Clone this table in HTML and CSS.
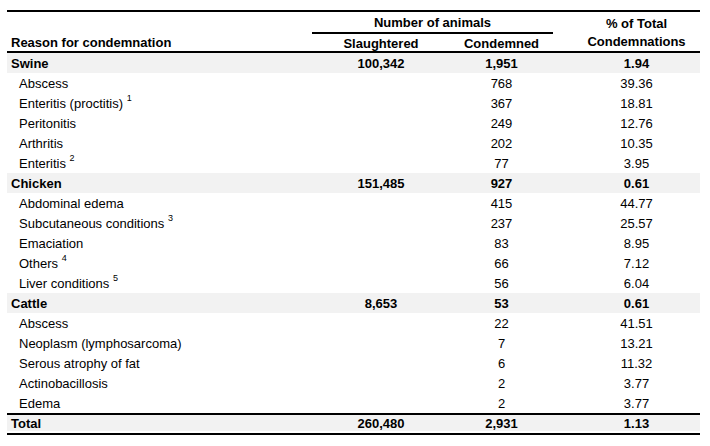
FILE: index.html
```html
<!DOCTYPE html>
<html>
<head>
<meta charset="utf-8">
<link rel="stylesheet" href="styles.css">
</head>
<body>
<table class="tbl">
  <colgroup>
    <col class="c-reason">
    <col class="c-slaugh">
    <col class="c-cond">
    <col class="c-pct">
  </colgroup>
  <thead>
    <tr class="h1">
      <th class="reason-h" rowspan="2">Reason for condemnation</th>
      <th class="group-h" colspan="2">Number of animals</th>
      <th class="pct-h" rowspan="2">% of Total<br>Condemnations</th>
    </tr>
    <tr class="h2">
      <th class="num">Slaughtered</th>
      <th class="num">Condemned</th>
    </tr>
  </thead>
  <tbody>
    <tr class="grp"><td>Swine</td><td class="num">100,342</td><td class="num">1,951</td><td class="pct">1.94</td></tr>
    <tr class="item"><td>Abscess</td><td></td><td class="num">768</td><td class="pct">39.36</td></tr>
    <tr class="item"><td>Enteritis (proctitis) <sup>1</sup></td><td></td><td class="num">367</td><td class="pct">18.81</td></tr>
    <tr class="item"><td>Peritonitis</td><td></td><td class="num">249</td><td class="pct">12.76</td></tr>
    <tr class="item"><td>Arthritis</td><td></td><td class="num">202</td><td class="pct">10.35</td></tr>
    <tr class="item"><td>Enteritis <sup>2</sup></td><td></td><td class="num">77</td><td class="pct">3.95</td></tr>
    <tr class="grp"><td>Chicken</td><td class="num">151,485</td><td class="num">927</td><td class="pct">0.61</td></tr>
    <tr class="item"><td>Abdominal edema</td><td></td><td class="num">415</td><td class="pct">44.77</td></tr>
    <tr class="item"><td>Subcutaneous conditions <sup>3</sup></td><td></td><td class="num">237</td><td class="pct">25.57</td></tr>
    <tr class="item"><td>Emaciation</td><td></td><td class="num">83</td><td class="pct">8.95</td></tr>
    <tr class="item"><td>Others <sup>4</sup></td><td></td><td class="num">66</td><td class="pct">7.12</td></tr>
    <tr class="item"><td>Liver conditions <sup>5</sup></td><td></td><td class="num">56</td><td class="pct">6.04</td></tr>
    <tr class="grp"><td>Cattle</td><td class="num">8,653</td><td class="num">53</td><td class="pct">0.61</td></tr>
    <tr class="item"><td>Abscess</td><td></td><td class="num">22</td><td class="pct">41.51</td></tr>
    <tr class="item"><td>Neoplasm (lymphosarcoma)</td><td></td><td class="num">7</td><td class="pct">13.21</td></tr>
    <tr class="item"><td>Serous atrophy of fat</td><td></td><td class="num">6</td><td class="pct">11.32</td></tr>
    <tr class="item"><td>Actinobacillosis</td><td></td><td class="num">2</td><td class="pct">3.77</td></tr>
    <tr class="item"><td>Edema</td><td></td><td class="num">2</td><td class="pct">3.77</td></tr>
  </tbody>
  <tfoot>
    <tr class="total"><td>Total</td><td class="num">260,480</td><td class="num">2,931</td><td class="pct">1.13</td></tr>
  </tfoot>
</table>
</body>
</html>
```

FILE: styles.css
```css
html, body {
  margin: 0;
  padding: 0;
  background: #fff;
}
body {
  padding: 10px 0 0 7px;
  font-family: "Liberation Sans", Arial, sans-serif;
  font-size: 13px;
  color: #000;
}
.tbl {
  width: 693px;
  border-collapse: separate;
  border-spacing: 0;
  table-layout: fixed;
  border-top: 2px solid #000;
}
.c-reason { width: 305px; }
.c-slaugh { width: 138px; }
.c-cond { width: 103px; }
.c-pct { width: 147px; }

th, td {
  padding: 0;
  line-height: 15px;
  white-space: nowrap;
  box-sizing: border-box;
}
th {
  font-weight: bold;
}

/* header: 12..53 */
.group-h {
  height: 22px;
  text-align: center;
  vertical-align: middle;
  border-bottom: 2px solid #000;
}
.h2 th {
  height: 19px;
  vertical-align: bottom;
  border-bottom: 2px solid #000;
}
.reason-h {
  text-align: left;
  vertical-align: bottom;
  padding-left: 4px;
  padding-bottom: 1px;
  border-bottom: 2px solid #000;
}
.pct-h {
  text-align: center;
  padding-left: 20px;
  padding-top: 2px;
  vertical-align: middle;
  line-height: 18px;
  border-bottom: 2px solid #000;
}
.num {
  text-align: center;
}
.pct {
  text-align: center;
  padding-left: 20px;
}

/* body rows */
tbody td {
  height: 20px;
  vertical-align: middle;
}
.grp td {
  background: #f2f2f2;
  font-weight: bold;
}
.grp td:first-child {
  padding-left: 4px;
}
.item td:first-child {
  padding-left: 12px;
}
sup {
  font-size: 9px;
  line-height: 0;
  vertical-align: 7px;
}

/* total row */
tfoot td {
  height: 22px;
  font-weight: bold;
  line-height: 16px;
  border-top: 2px solid #000;
  border-bottom: 2px solid #000;
  background: linear-gradient(#f2f2f2, #f2f2f2) top left / 100% 16px no-repeat;
  background-origin: padding-box;
  background-clip: padding-box;
  vertical-align: top;
  padding-top: 1px;
}
tfoot td:first-child {
  padding-left: 4px;
}
```
